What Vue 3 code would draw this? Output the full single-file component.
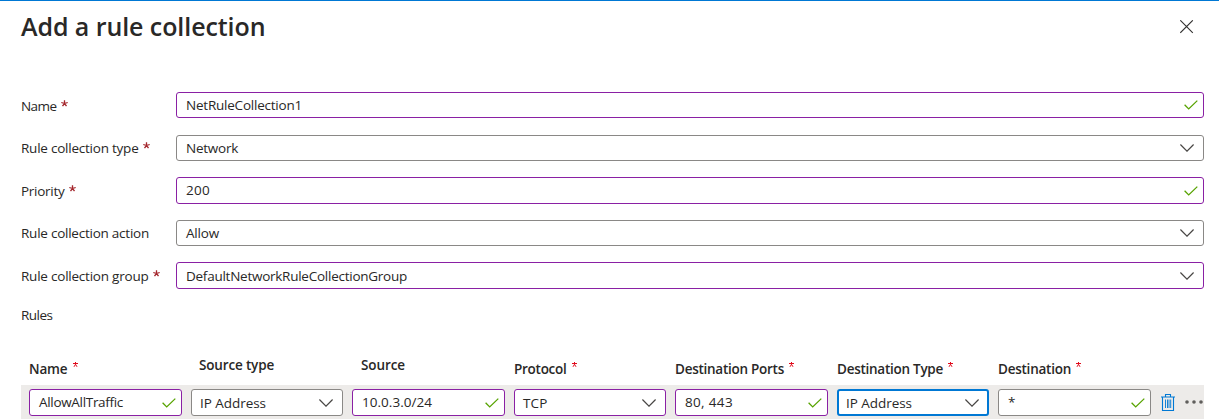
<script setup>
// Spreads letter spacing so a label occupies its designed width.
const vFit = {
  mounted(el, { value }) {
    if (!value) return
    const natural = el.getBoundingClientRect().width
    const count = el.textContent.length
    el.style.letterSpacing = `${(value - natural) / count}px`
  },
}

const fields = [
  { label: 'Name', lw: 35.5, required: true, value: 'NetRuleCollection1', vw: 116, kind: 'check', tone: 'purple', cls: 'f-name' },
  { label: 'Rule collection type', lw: 117.5, required: true, value: 'Network', vw: 52, kind: 'chevron', tone: 'gray', cls: 'f-type' },
  { label: 'Priority', lw: 43.5, required: true, value: '200', vw: 24, kind: 'check', tone: 'purple', cls: 'f-priority' },
  { label: 'Rule collection action', lw: 128, required: false, value: 'Allow', vw: 33, kind: 'chevron', tone: 'gray', cls: 'f-action' },
  { label: 'Rule collection group', lw: 127.5, required: true, value: 'DefaultNetworkRuleCollectionGroup', vw: 221, kind: 'chevron', tone: 'purple', cls: 'f-group' },
]

const columns = [
  { title: 'Name', tw: 38.5, required: true, value: 'AllowAllTraffic', vw: 84, kind: 'check', tone: 'purple' },
  { title: 'Source type', tw: 75, required: false, value: 'IP Address', vw: 66, kind: 'chevron', tone: 'gray' },
  { title: 'Source', tw: 44, required: false, value: '10.0.3.0/24', vw: 70, kind: 'check', tone: 'purple' },
  { title: 'Protocol', tw: 52.5, required: true, value: 'TCP', vw: 24.5, kind: 'chevron', tone: 'purple' },
  { title: 'Destination Ports', tw: 109, required: true, value: '80, 443', vw: 48, kind: 'check', tone: 'purple' },
  { title: 'Destination Type', tw: 106, required: true, value: 'IP Address', vw: 66, kind: 'chevron', tone: 'blue' },
  { title: 'Destination', tw: 73, required: true, value: '*', vw: 0, kind: 'check', tone: 'gray' },
]
</script>

<template>
  <main class="panel">
    <header class="head">
      <h1><span v-fit="244.5">Add a rule collection</span></h1>
      <svg class="close" width="14" height="14" viewBox="0 0 14 14"><path d="M.3.3l12.500 12.500M12.800.3L.3 12.800" /></svg>
    </header>

    <section class="form">
      <div v-for="f in fields" :key="f.label" class="field" :class="f.cls">
        <label><span v-fit="f.lw">{{ f.label }}</span><svg v-if="f.required" class="star" width="7" height="7" viewBox="0 0 7 7"><path d="M3.5 .2v3.3M.3 2.5l3.2 1M6.7 2.5l-3.2 1M1.5 6.2l2-2.7M5.5 6.2l-2-2.7" /></svg></label>
        <div class="box" :class="[f.tone, f.kind]">
          <span v-fit="f.vw" class="value">{{ f.value }}</span>
          <svg v-if="f.kind === 'check'" class="tick" width="14" height="10" viewBox="0 0 14 10"><path d="M.6 4.8l4.1 4.1L13.3.6" /></svg>
          <svg v-else class="arrow" width="14" height="8" viewBox="0 0 14 8"><path d="M.4.5L7 7.1 13.6.5" /></svg>
        </div>
      </div>
    </section>

    <h2><span v-fit="31.5">Rules</span></h2>

    <section class="rules">
      <div class="titles">
        <div v-for="c in columns" :key="c.title" class="title" :class="{ raised: !c.required }">
          <span v-fit="c.tw">{{ c.title }}</span><svg v-if="c.required" class="mark" width="5" height="5" viewBox="0 0 5 5"><path d="M2.5 0v2.5M0 1.500h5M1 4.8L2.5 2.3 4 4.8" /></svg>
        </div>
      </div>
      <div class="row">
        <div v-for="c in columns" :key="c.title" class="box" :class="[c.tone, c.kind]">
          <span v-fit="c.vw" class="value">{{ c.value }}</span>
          <svg v-if="c.kind === 'check'" class="tick" width="14" height="10" viewBox="0 0 14 10"><path d="M.6 4.8l4.1 4.1L13.3.6" /></svg>
          <svg v-else class="arrow" width="14" height="8" viewBox="0 0 14 8"><path d="M.4.5L7 7.1 13.6.5" /></svg>
        </div>
        <svg class="trash" width="14" height="18" viewBox="0 0 14 18">
          <path d="M4.5 2.5v-2h5v2M0 3h14M1.5 3.500v13h11v-13" />
          <path class="slats" d="M4.500 5.500v8.500M6.500 5.500v8.500M8 5.500v8.500M9.700 5.500v8.500" />
        </svg>
        <svg class="more" width="18" height="4" viewBox="0 0 18 4"><circle cx="2" cy="2" r="1.800" /><circle cx="9" cy="2" r="1.800" /><circle cx="16" cy="2" r="1.800" /></svg>
      </div>
    </section>
  </main>
</template>

<style scoped>
* { box-sizing: border-box; }
.panel {
  width: 1219px;
  height: 420px;
  overflow: hidden;
  border-top: 1px solid #0078d4;
  padding-left: 21px;
  background: #fff;
  color: #292827;
  font: 13.5px/18px "Open Sans", "Noto Sans", sans-serif;
  white-space: nowrap;
}
.head { display: flex; justify-content: space-between; width: 1173px; height: 91px; }
h1 { margin: 9px 0 0; font-size: 25px; line-height: 32px; font-weight: 600; }
.close { margin-top: 19px; fill: none; stroke: #323130; stroke-width: 1.1; }
.form { display: flex; flex-direction: column; gap: 16px; width: 1183px; }
.field { display: grid; grid-template-columns: 155px 1fr; }
.field label { display: flex; padding-top: 5px; }
.f-name { height: 27px; }
.f-type { height: 26px; }
.f-priority { height: 27px; }
.f-action { height: 26px; }
.f-group { height: 27px; }
.f-name .box { height: 26px; }
.f-type label, .f-action label { padding-top: 4px; }
.f-priority .value { margin-top: -2px; }
.star { margin: 3px 0 0 4px; fill: none; stroke: #a4262c; stroke-width: 1.3; }
.box {
  display: flex;
  align-items: center;
  justify-content: space-between;
  border: 1px solid #8a8886;
  border-radius: 3px;
  background: #fff;
  padding: 0 5px 0 9px;
}
.box.chevron { padding-right: 9px; }
.box.purple { border-color: #8a20a4; }
.box.blue { border: 2px solid #0078d4; padding: 0 8px; }
.tick { fill: none; stroke: #57a300; stroke-width: 1.3; }
.arrow { fill: none; stroke: #484644; stroke-width: 1.2; }
h2 { margin: 17px 0 0; font-size: 13.5px; line-height: 18px; font-weight: 400; }
.rules { width: 1183px; margin-top: 35px; }
.titles { display: grid; grid-template-columns: 162px 161px 162px 161px 162px 161px 153px; padding-left: 8px; height: 26px; }
.title { display: flex; padding-top: 1px; font-weight: 600; }
.title.raised { padding-top: 0; margin-top: -3px; }
.title:nth-child(2) { padding-left: 8px; }
.title:nth-child(3) { padding-left: 9px; }
.mark { margin: 2px 0 0 5px; fill: none; stroke: #e00b1c; stroke-width: 1; }
.row {
  display: grid;
  grid-template-columns: 153px 152px 153px 152px 153px 152px 153px 14px 18px;
  column-gap: 9px;
  height: 34px;
  padding: 4px 0 3px 8px;
  background: #edebe9;
}
.row .value { margin-top: -1px; }
.row .chevron .value { margin: 1px 0 0 -1px; }
.trash { margin: 5px 0 0 1px; fill: none; stroke: #0078d4; stroke-width: 1.1; }
.slats { stroke-width: .9; }
.more { margin: 11px 0 0 2px; fill: #605e5c; }
</style>

<style>
body { background: #fff; }
</style>
